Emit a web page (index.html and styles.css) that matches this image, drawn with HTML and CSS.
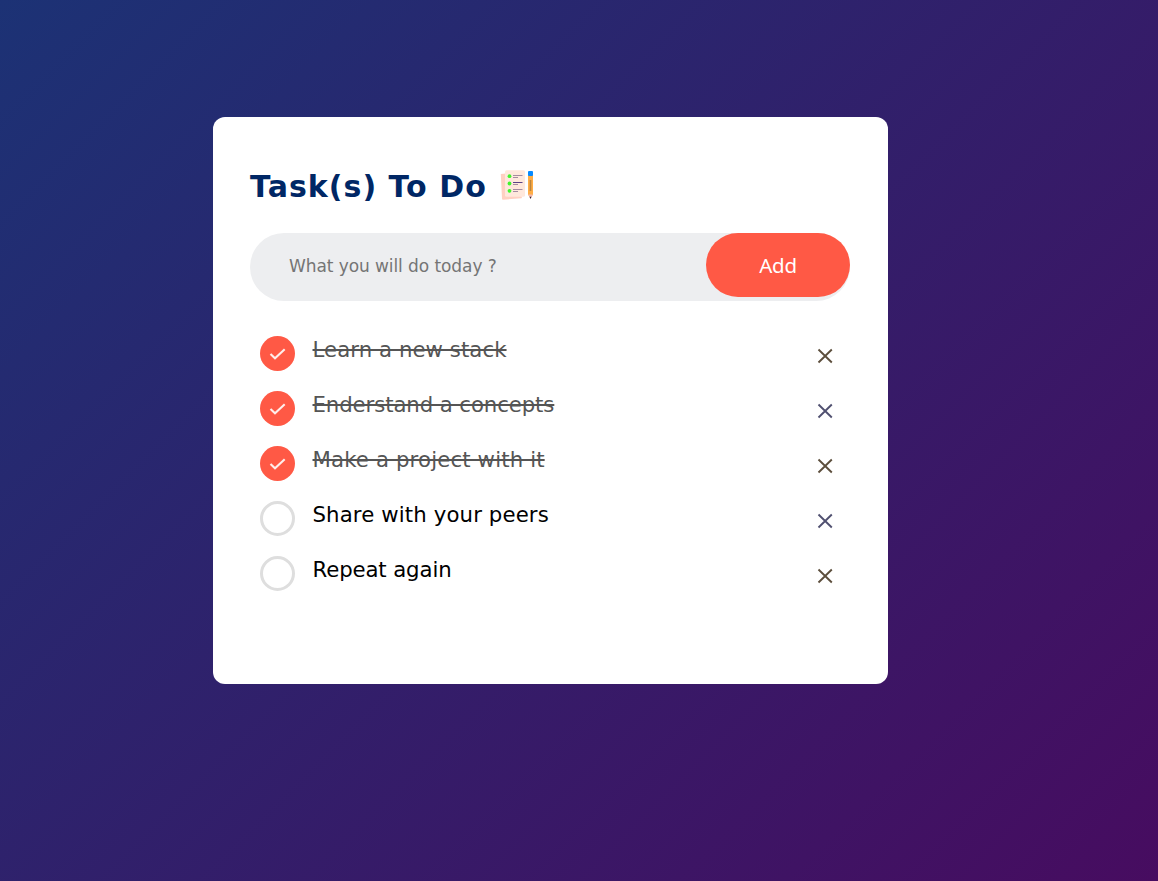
FILE: index.html
```html
<!DOCTYPE html>
<html lang="en">
<head>
<meta charset="utf-8">
<title>To Do</title>
<link rel="stylesheet" href="styles.css">
</head>
<body>
<main class="todo-app">
  <h1 class="title"><span class="title-text">Task(s) To Do</span>
    <svg class="title-icon" viewBox="0 0 36 32">
      <path d="M0.8 4 L6 3.4 L22 27 L21.5 28.2 L3 29.7 Q2 29.7 2 28.7 Z" fill="#ffd0c2"/>
      <rect x="5" y="0.2" width="20" height="26.6" rx="1.5" fill="#ffe8dc"/>
      <g fill="#42f52d"><circle cx="9.5" cy="6.2" r="1.9"/><circle cx="9.5" cy="13.5" r="1.9"/><circle cx="9.5" cy="20.8" r="1.9"/></g>
      <g fill="#a48ca0"><rect x="13" y="5" width="9.5" height="1"/><rect x="13" y="7" width="5" height="1"/><rect x="13" y="14" width="5" height="1"/><rect x="13" y="19" width="9.5" height="1"/><rect x="13" y="21" width="5" height="1"/></g>
      <rect x="13" y="12" width="9.5" height="1" fill="#5b4385"/>
      <path d="M28 5 h5 v19.5 l-2.5 4 l-2.5 -4z" fill="#ffad45"/>
      <rect x="29.7" y="10" width="1.6" height="11" fill="#b9843f"/>
      <rect x="28" y="1" width="5" height="5" rx="1" fill="#078aff"/>
      <path d="M28 24.5 h5 l-2.5 4z" fill="#f3b9b4"/>
      <path d="M29.5 26.7 h2 l-1 2.2z" fill="#292340"/>
    </svg>
  </h1>
  <div class="row">
    <input class="task-input" type="text" placeholder="What you will do today ?">
    <button class="add">Add</button>
  </div>
  <ul class="tasks">
    <li class="task done"><svg class="mark" viewBox="0 0 35 35"><circle cx="17.5" cy="17.5" r="17.5"/><path d="M10.5 18 L15 22.3 L24.7 13.3"/></svg><span class="label t1">Learn a new stack</span><svg class="close" viewBox="0 0 16 16"><path d="M1.5 1.5 L14.8 14.5 M14.8 1.5 L1.5 14.5"/></svg></li>
    <li class="task done"><svg class="mark" viewBox="0 0 35 35"><circle cx="17.5" cy="17.5" r="17.5"/><path d="M10.5 18 L15 22.3 L24.7 13.3"/></svg><span class="label t2">Enderstand a concepts</span><svg class="close cool" viewBox="0 0 16 16"><path d="M1.5 1.5 L14.8 14.5 M14.8 1.5 L1.5 14.5"/></svg></li>
    <li class="task done"><svg class="mark" viewBox="0 0 35 35"><circle cx="17.5" cy="17.5" r="17.5"/><path d="M10.5 18 L15 22.3 L24.7 13.3"/></svg><span class="label t3">Make a project with it</span><svg class="close" viewBox="0 0 16 16"><path d="M1.5 1.5 L14.8 14.5 M14.8 1.5 L1.5 14.5"/></svg></li>
    <li class="task"><span class="mark ring"></span><span class="label t4">Share with your peers</span><svg class="close cool" viewBox="0 0 16 16"><path d="M1.5 1.5 L14.8 14.5 M14.8 1.5 L1.5 14.5"/></svg></li>
    <li class="task"><span class="mark ring"></span><span class="label t5">Repeat again</span><svg class="close" viewBox="0 0 16 16"><path d="M1.5 1.5 L14.8 14.5 M14.8 1.5 L1.5 14.5"/></svg></li>
  </ul>
</main>
</body>
</html>
```

FILE: styles.css
```css
* { box-sizing: border-box; margin: 0; padding: 0; }
body {
  min-height: 881px;
  overflow: hidden;
  padding: 117px 0 0 213px;
  font-family: Verdana, "DejaVu Sans", sans-serif;
  background: linear-gradient(135deg, #1c3275, #470c60);
}
.todo-app {
  width: 675px;
  height: 567px;
  padding: 50px 38px 0 37px;
  border-radius: 12px;
  background: #fff;
}
.title {
  display: flex;
  align-items: center;
  height: 38px;
  color: #002765;
  font-size: 30px;
  line-height: 38px;
  white-space: nowrap;
}
.title-text { width: 249px; padding-top: 2px; letter-spacing: 1.03px; }
.title-icon { width: 36px; height: 32px; margin-left: 0.5px; }
.row {
  display: flex;
  height: 68px;
  margin-top: 28px;
  border-radius: 38px;
  background: #edeef0;
}
.task-input {
  flex: 1;
  min-width: 0;
  height: 66px;
  padding-left: 39px;
  border: 0;
  outline: 0;
  background: transparent;
  font: 17px Verdana, "DejaVu Sans", sans-serif;
  letter-spacing: -0.08px;
}
.task-input::placeholder { color: #757575; }
.add {
  width: 144px;
  height: 64px;
  border: 0;
  border-radius: 50px;
  background: #ff5945;
  color: #fff;
  font: 20.5px "Noto Sans", sans-serif;
  letter-spacing: -0.2px;
}
.tasks { margin-top: 30px; list-style: none; }
.task {
  display: flex;
  height: 55px;
  padding: 5px 17px 0 10px;
}
.mark { flex: none; width: 35px; height: 35px; }
.mark circle { fill: #ff5945; }
.mark path { fill: none; stroke: #ffeeeb; stroke-width: 2.1; }
.ring { border: 3px solid #dedede; border-radius: 50%; }
.label {
  flex: 1;
  margin: 1px 0 0 17.5px;
  font-size: 21.25px;
  line-height: 26px;
  white-space: nowrap;
}
.t1 { letter-spacing: 0.06px; }
.t2 { letter-spacing: -0.1px; }
.t3 { letter-spacing: 0.14px; }
.t4 { letter-spacing: 0.12px; }
.t5 { letter-spacing: -0.12px; }
.done .label { color: #555; text-decoration: line-through; text-decoration-thickness: 2px; }
.close {
  width: 16px;
  height: 16px;
  margin-top: 11.5px;
  fill: none;
  stroke: #5c4e3c;
  stroke-width: 1.9;
}
.cool { stroke: #505070; }
```
